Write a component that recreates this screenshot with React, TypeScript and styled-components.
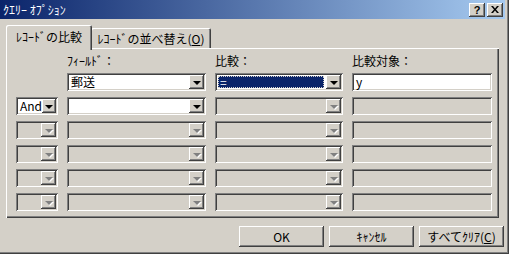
import { Fragment } from 'react'
import styled, { createGlobalStyle, css } from 'styled-components'

const FACE = '#d4d0c8'
const LIGHT = '#ffffff'
const SHADOW = '#808080'
const DARK = '#404040'

const GlobalStyle = createGlobalStyle`
  html, body {
    margin: 0;
    padding: 0;
    background: ${FACE};
  }
  body {
    font-family: "Noto Sans CJK JP", "Liberation Sans", sans-serif;
    font-size: 12px;
    color: #000;
  }
`

const sunken = css`
  box-shadow:
    inset 1px 1px 0 ${SHADOW},
    inset -1px -1px 0 ${LIGHT},
    inset 2px 2px 0 ${DARK},
    inset -2px -2px 0 ${FACE};
`

const raised = css`
  box-shadow:
    inset -1px -1px 0 ${DARK},
    inset 1px 1px 0 ${LIGHT},
    inset -2px -2px 0 ${SHADOW};
`

const Window = styled.div`
  width: 509px;
  height: 254px;
  box-sizing: border-box;
  padding: 0 2px 2px 0;
  background: ${FACE};
  display: flex;
  flex-direction: column;
  box-shadow:
    inset -1px -1px 0 ${DARK},
    inset -2px -2px 0 ${SHADOW};
`

const TitleBar = styled.div`
  height: 19px;
  margin-right: 2px;
  padding: 0 2px 0 3px;
  display: flex;
  align-items: center;
  justify-content: space-between;
  background: linear-gradient(to right, #0a246a, #a6caf0);
`

const TitleText = styled.span`
  color: #fff;
  font-size: 12px;
  line-height: 19px;
`

const CaptionButtons = styled.div`
  display: flex;
  gap: 2px;
`

const CaptionButton = styled.div`
  width: 16px;
  height: 14px;
  background: ${FACE};
  ${raised};
  display: flex;
  align-items: center;
  justify-content: center;
  font-family: "Liberation Sans", sans-serif;
  font-weight: bold;
  font-size: 11px;
  line-height: 14px;
`

const Body = styled.div`
  flex: 1;
  display: flex;
  flex-direction: column;
  padding: 6px 0 0 6px;
`

const TabStrip = styled.div`
  display: flex;
  align-items: flex-end;
  height: 23px;
`

const Tab = styled.div<{ $active?: boolean }>`
  position: relative;
  box-sizing: border-box;
  display: flex;
  align-items: center;
  justify-content: center;
  background: ${FACE};
  white-space: nowrap;
  border-radius: 2px 2px 0 0;
  box-shadow:
    inset 1px 1px 0 ${LIGHT},
    inset -1px 0 0 ${DARK},
    inset -2px 0 0 ${SHADOW};
  ${(p) =>
    p.$active
      ? css`
          width: 86px;
          height: 25px;
          margin-bottom: -2px;
          padding-bottom: 2px;
          z-index: 1;
        `
      : css`
          width: 120px;
          height: 20px;
          margin-left: -1px;
        `}
`

const Panel = styled.div`
  width: 493px;
  height: 170px;
  box-sizing: border-box;
  padding: 7px 0 0 10px;
  box-shadow:
    inset 1px 1px 0 ${LIGHT},
    inset -1px -1px 0 ${DARK},
    inset -2px -2px 0 ${SHADOW};
`

const CriteriaGrid = styled.div`
  display: grid;
  grid-template-columns: 42px 139px 128px 140px;
  grid-template-rows: 12px repeat(6, 18px);
  column-gap: 9px;
  row-gap: 6px;
`

const ColumnLabel = styled.span`
  line-height: 12px;
  white-space: nowrap;
  align-self: end;
`

const Combo = styled.div<{ $disabled?: boolean }>`
  display: flex;
  align-items: stretch;
  padding: 2px;
  background: ${(p) => (p.$disabled ? FACE : LIGHT)};
  ${sunken};
`

const ComboText = styled.div<{ $selected?: boolean }>`
  flex: 1;
  display: flex;
  align-items: center;
  padding-left: 2px;
  line-height: 14px;
  white-space: nowrap;
  ${(p) =>
    p.$selected &&
    css`
      margin: 1px 2px 1px 1px;
      background: #0a246a;
      color: #fff;
      outline: 1px dotted #d4d0c8;
      outline-offset: -1px;
    `}
`

const DropButton = styled.div`
  width: 15px;
  background: ${FACE};
  ${raised};
  display: flex;
  align-items: center;
  justify-content: center;
`

const Arrow = styled.span<{ $disabled?: boolean }>`
  width: 0;
  height: 0;
  border-left: 4px solid transparent;
  border-right: 4px solid transparent;
  border-top: 4px solid ${(p) => (p.$disabled ? SHADOW : '#000')};
  margin-top: 1px;
  ${(p) => p.$disabled && css`filter: drop-shadow(1px 1px 0 #fff);`}
`

const TextBox = styled.div<{ $disabled?: boolean }>`
  display: flex;
  align-items: center;
  padding: 0 4px;
  line-height: 14px;
  background: ${(p) => (p.$disabled ? FACE : LIGHT)};
  ${sunken};
`

const Footer = styled.div`
  display: flex;
  justify-content: flex-end;
  gap: 5px;
  margin-top: 8px;
  padding-right: 3px;
`

const PushButton = styled.div`
  width: 85px;
  height: 21px;
  display: flex;
  align-items: center;
  justify-content: center;
  background: ${FACE};
  ${raised};
  white-space: nowrap;
  line-height: 14px;
`

type ComboProps = { text?: string; disabled?: boolean; selected?: boolean }

const ComboBox = ({ text, disabled, selected }: ComboProps) => (
  <Combo $disabled={disabled}>
    <ComboText $selected={selected}>{text}</ComboText>
    <DropButton>
      <Arrow $disabled={disabled} />
    </DropButton>
  </Combo>
)

const rows = [
  { join: null, field: '郵送', op: '=', value: 'y', active: true },
  { join: 'And', field: '', op: '', value: '', active: false },
  { join: '', field: '', op: '', value: '', active: false },
  { join: '', field: '', op: '', value: '', active: false },
  { join: '', field: '', op: '', value: '', active: false },
  { join: '', field: '', op: '', value: '', active: false },
]

export default function App() {
  return (
    <>
      <GlobalStyle />
      <Window>
        <TitleBar>
          <TitleText>ｸｴﾘｰ ｵﾌﾟｼｮﾝ</TitleText>
          <CaptionButtons>
            <CaptionButton>?</CaptionButton>
            <CaptionButton>
              <svg width="8" height="7" viewBox="0 0 8 7">
                <path d="M0 0h2l2 2.5L6 0h2L5 3.5 8 7H6L4 4.5 2 7H0l3-3.5z" fill="#000" />
              </svg>
            </CaptionButton>
          </CaptionButtons>
        </TitleBar>
        <Body>
          <TabStrip>
            <Tab $active>ﾚｺｰﾄﾞの比較</Tab>
            <Tab>
              ﾚｺｰﾄﾞの並べ替え(<u>O</u>)
            </Tab>
          </TabStrip>
          <Panel>
            <CriteriaGrid>
              <span />
              <ColumnLabel>ﾌｨｰﾙﾄﾞ：</ColumnLabel>
              <ColumnLabel>比較：</ColumnLabel>
              <ColumnLabel>比較対象：</ColumnLabel>
              {rows.map((r, i) => (
                <Fragment key={i}>
                  {r.join === null ? <span /> : <ComboBox text={r.join} disabled={i > 1} />}
                  <ComboBox text={r.field} disabled={i > 1} />
                  <ComboBox text={r.op} disabled={!r.active} selected={r.active} />
                  <TextBox $disabled={!r.active}>{r.value}</TextBox>
                </Fragment>
              ))}
            </CriteriaGrid>
          </Panel>
          <Footer>
            <PushButton>OK</PushButton>
            <PushButton>ｷｬﾝｾﾙ</PushButton>
            <PushButton>
              すべてｸﾘｱ(<u>C</u>)
            </PushButton>
          </Footer>
        </Body>
      </Window>
    </>
  )
}
